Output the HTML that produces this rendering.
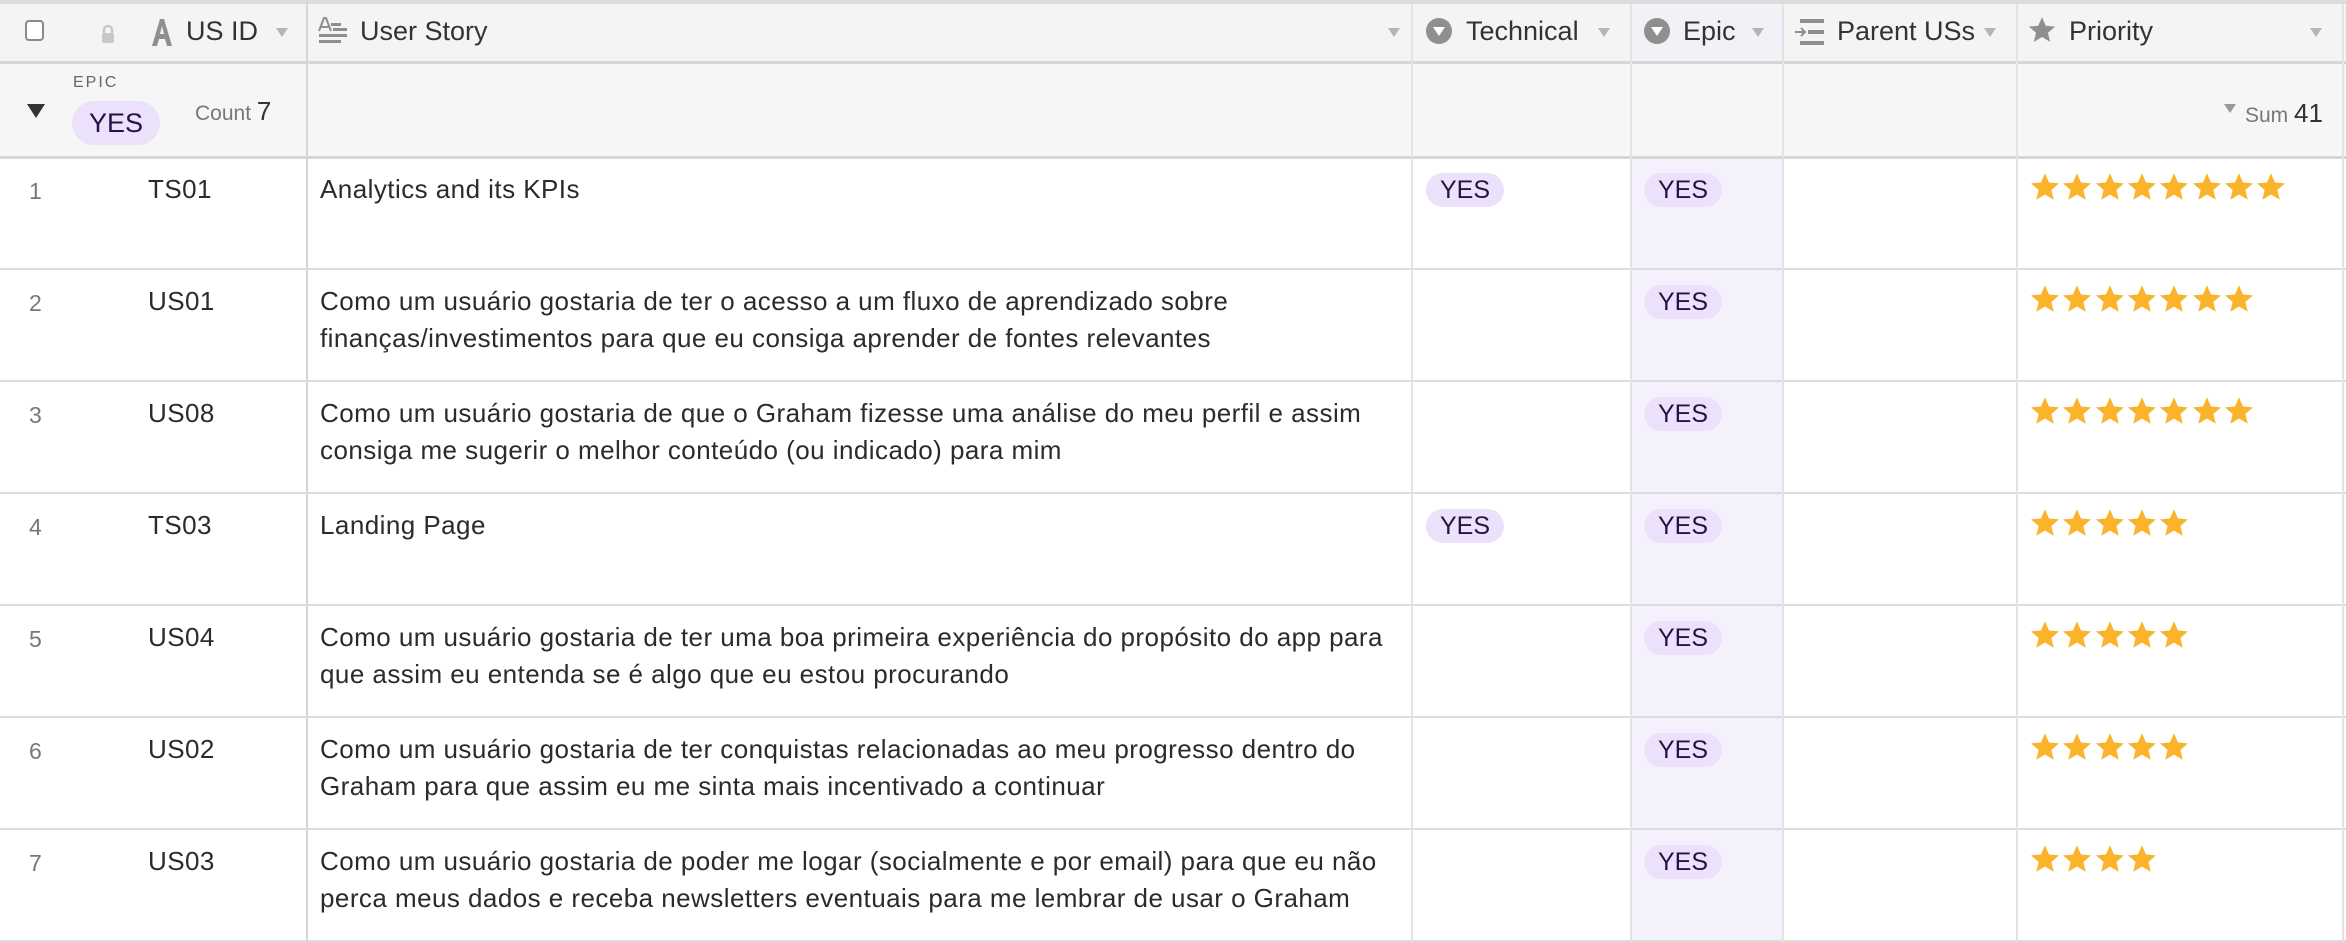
<!DOCTYPE html>
<html><head><meta charset="utf-8"><style>
*{margin:0;padding:0;box-sizing:border-box}
body{width:2346px;height:942px;overflow:hidden;background:#fff;font-family:"Liberation Sans",sans-serif;position:relative;color:#333}
.a{position:absolute;white-space:nowrap}
.hl{position:absolute;left:0;width:2346px;height:2px;background:#dcdcdc}
.vl{position:absolute;width:2px;background:#e3e3e3}
.ht{font-size:27px;color:#333;top:16px}
.dd{position:absolute;top:28px;width:0;height:0;border-left:6px solid transparent;border-right:6px solid transparent;border-top:9px solid #b5b5b5}
.pill{position:absolute;height:34px;border-radius:17px;background:#ebe1fa;color:#2a1045;font-size:25px;line-height:34px;padding:0 14px}
.num{color:#777;font-size:23px}
.txt{font-size:26px;line-height:37px;color:#2b2b2b;letter-spacing:0.45px}
.circ{position:absolute;top:18px;width:26px;height:26px;border-radius:50%;background:#8f8f8f}
.circ:after{content:"";position:absolute;left:7px;top:9px;border-left:6px solid transparent;border-right:6px solid transparent;border-top:9px solid #fff}
</style></head><body>
<div class="a" style="left:0;top:0;width:2346px;height:4px;background:#dcdcdc"></div>
<div class="a" style="left:0;top:4px;width:2346px;height:58px;background:#f4f4f4"></div>
<div class="a" style="left:0;top:63px;width:2346px;height:94px;background:#f6f6f6"></div>
<div class="a" style="left:1632px;top:4px;width:151px;height:58px;background:#f3f1f8"></div>
<div class="a" style="left:1632px;top:158px;width:151px;height:784px;background:#f4f1fd"></div>
<div class="hl" style="top:61px;height:3px;background:#d6d6d6"></div>
<div class="hl" style="top:156px;height:3px;background:#d6d6d6"></div>
<div class="hl" style="top:268px"></div>
<div class="hl" style="top:380px"></div>
<div class="hl" style="top:492px"></div>
<div class="hl" style="top:604px"></div>
<div class="hl" style="top:716px"></div>
<div class="hl" style="top:828px"></div>
<div class="hl" style="top:940px"></div>
<div class="vl" style="left:306px;top:0;height:942px;background:#d6d6d6"></div>
<div class="vl" style="left:1411px;top:4px;height:938px"></div>
<div class="vl" style="left:1630px;top:4px;height:938px"></div>
<div class="vl" style="left:1782px;top:4px;height:938px"></div>
<div class="vl" style="left:2016px;top:4px;height:938px"></div>
<div class="vl" style="left:2342px;top:4px;height:938px"></div>
<div class="a" style="left:25px;top:20px;width:19px;height:21px;border:2px solid #8a8a8a;border-radius:4px;background:#fff"></div>
<svg class="a" style="left:100px;top:24px" width="16" height="20" viewBox="0 0 16 20"><path d="M4 9V6a4 4 0 0 1 8 0v3" fill="none" stroke="#c8c8c8" stroke-width="2.5"/><rect x="2" y="9" width="12" height="10" rx="2" fill="#c8c8c8"/></svg>
<svg class="a" style="left:150px;top:18px" width="24" height="28" viewBox="0 0 24 28"><path d="M2 28L10 1h4l8 27h-5l-2-7H9l-2 7zM10 16h4l-2-8z" fill="#8f8f8f"/></svg>
<div class="a ht" style="left:186px">US ID</div>
<div class="dd" style="left:276px"></div>
<svg class="a" style="left:318px;top:17px" width="30" height="28" viewBox="0 0 30 28"><path d="M1 14L6 1h2l5 13M3 10h8" fill="none" stroke="#8f8f8f" stroke-width="2"/><rect x="13" y="6" width="10" height="3" fill="#8f8f8f"/><rect x="1" y="17" width="28" height="3" fill="#8f8f8f"/><rect x="1" y="23" width="22" height="3" fill="#8f8f8f"/><rect x="15" y="11" width="14" height="3" fill="#8f8f8f"/></svg>
<div class="a ht" style="left:360px">User Story</div>
<div class="dd" style="left:1388px"></div>
<div class="circ" style="left:1426px"></div>
<div class="a ht" style="left:1466px">Technical</div>
<div class="dd" style="left:1598px"></div>
<div class="circ" style="left:1644px"></div>
<div class="a ht" style="left:1683px">Epic</div>
<div class="dd" style="left:1752px"></div>
<svg class="a" style="left:1795px;top:19px" width="30" height="26" viewBox="0 0 30 26"><rect x="5" y="0" width="24" height="4" fill="#8f8f8f"/><rect x="13" y="11" width="16" height="4" fill="#8f8f8f"/><rect x="5" y="22" width="24" height="4" fill="#8f8f8f"/><path d="M0 13h9M6 9l4 4-4 4" fill="none" stroke="#8f8f8f" stroke-width="2"/></svg>
<div class="a ht" style="left:1837px">Parent USs</div>
<div class="dd" style="left:1984px"></div>
<svg class="a" style="left:2028px;top:16px" width="28" height="28" viewBox="0 0 24 24"><path d="M12 1l3.2 7.4 8 .7-6.1 5.3 1.9 7.8L12 18l-7 4.2 1.9-7.8L.8 9.1l8-.7z" fill="#8f8f8f"/></svg>
<div class="a ht" style="left:2069px">Priority</div>
<div class="dd" style="left:2310px"></div>
<div class="a" style="left:27px;top:104px;border-left:9px solid transparent;border-right:9px solid transparent;border-top:14px solid #333"></div>
<div class="a" style="left:73px;top:74px;font-size:16px;letter-spacing:2px;color:#666">EPIC</div>
<div class="a pill" style="left:72px;top:101px;height:44px;line-height:44px;border-radius:22px;font-size:27px;padding:0 17px">YES</div>
<div class="a" style="left:195px;top:96px;font-size:21px;color:#777">Count <span style="font-size:26px;color:#333">7</span></div>
<div class="a" style="left:2224px;top:104px;border-left:6px solid transparent;border-right:6px solid transparent;border-top:9px solid #999"></div>
<div class="a" style="left:2245px;top:98px;font-size:21px;color:#777">Sum <span style="font-size:26px;color:#333">41</span></div>
<div id="rows"></div>
<script>
var data=[["1","TS01",["Analytics and its KPIs"],1,8],
["2","US01",["Como um usuário gostaria de ter o acesso a um fluxo de aprendizado sobre","finanças/investimentos para que eu consiga aprender de fontes relevantes"],0,7],
["3","US08",["Como um usuário gostaria de que o Graham fizesse uma análise do meu perfil e assim","consiga me sugerir o melhor conteúdo (ou indicado) para mim"],0,7],
["4","TS03",["Landing Page"],1,5],
["5","US04",["Como um usuário gostaria de ter uma boa primeira experiência do propósito do app para","que assim eu entenda se é algo que eu estou procurando"],0,5],
["6","US02",["Como um usuário gostaria de ter conquistas relacionadas ao meu progresso dentro do","Graham para que assim eu me sinta mais incentivado a continuar"],0,5],
["7","US03",["Como um usuário gostaria de poder me logar (socialmente e por email) para que eu não","perca meus dados e receba newsletters eventuais para me lembrar de usar o Graham"],0,4]];
var h="",star='<path d="M12 1l3.2 7.4 8 .7-6.1 5.3 1.9 7.8L12 18l-7 4.2 1.9-7.8L.8 9.1l8-.7z" fill="#fbb32c"/>';
data.forEach(function(r,i){var t=158+112*i;
h+='<div class="a num" style="left:29px;top:'+(t+20)+'px">'+r[0]+'</div>';
h+='<div class="a txt" style="left:148px;top:'+(t+13)+'px">'+r[1]+'</div>';
h+='<div class="a txt" style="left:320px;top:'+(t+13)+'px">'+r[2].join('<br>')+'</div>';
if(r[3])h+='<div class="pill" style="left:1426px;top:'+(t+15)+'px">YES</div>';
h+='<div class="pill" style="left:1644px;top:'+(t+15)+'px">YES</div>';
for(var s=0;s<r[4];s++)h+='<svg class="a" style="left:'+(2030+s*32.3)+'px;top:'+(t+14)+'px" width="30" height="30" viewBox="0 0 24 24">'+star+'</svg>';
});
document.getElementById("rows").innerHTML=h;
</script>
</body></html>
